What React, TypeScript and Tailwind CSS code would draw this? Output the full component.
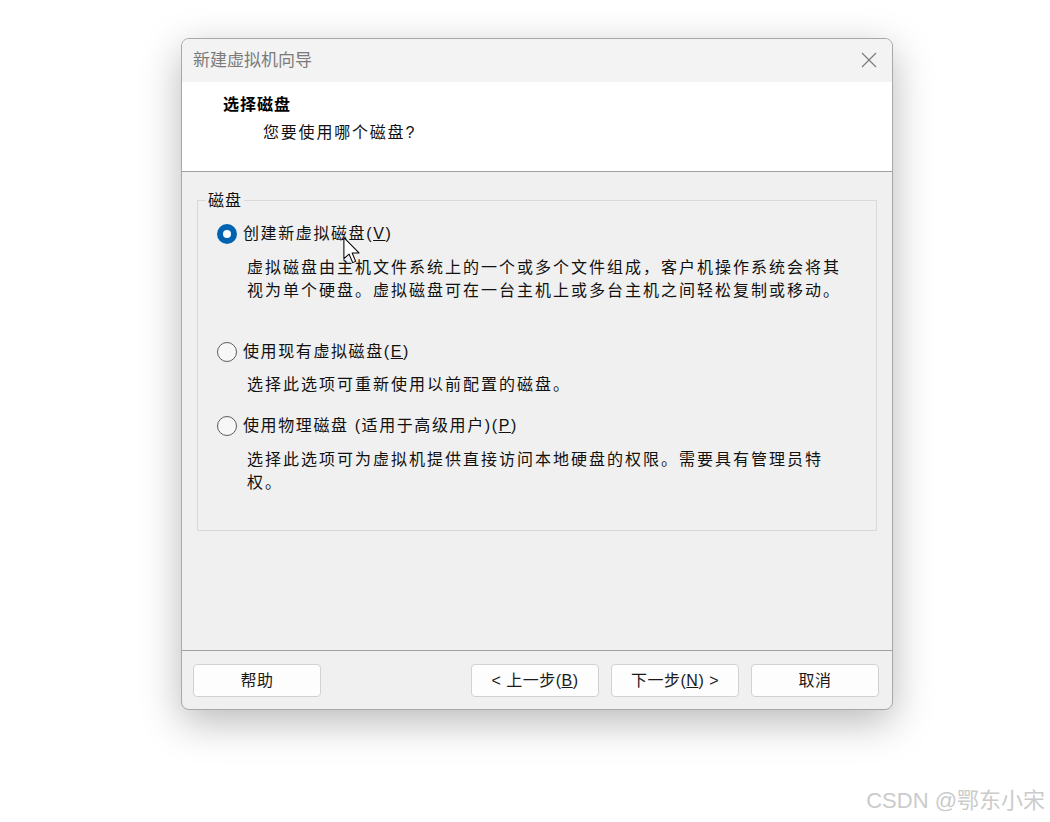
import React from "react";

const font = {
  fontFamily: '"Liberation Sans", "Noto Sans CJK SC", sans-serif',
};

function Radio({ checked }: { checked?: boolean }) {
  if (checked) {
    return (
      <span className="flex h-[20px] w-[20px] shrink-0 items-center justify-center rounded-full bg-[#0063b1]">
        <span className="h-[8px] w-[8px] rounded-full bg-white" />
      </span>
    );
  }
  return <span className="h-[20px] w-[20px] shrink-0 rounded-full border border-[#5c5c5c] bg-[#f7f7f7]" />;
}

function Btn({ children, className = "" }: { children: React.ReactNode; className?: string }) {
  return (
    <button
      className={`flex h-[33px] w-[128px] items-center justify-center rounded-[4px] border border-[#d2d2d2] bg-[#fdfdfd] text-[16px] tracking-[0.5px] text-[#1a1a1a] ${className}`}
    >
      {children}
    </button>
  );
}

export default function App() {
  return (
    <div className="relative h-[822px] w-[1050px] overflow-hidden bg-white pl-[181px] pt-[38px]" style={font}>
      <div className="flex w-[712px] flex-col overflow-hidden rounded-[8px] border border-[#a8a8a8] bg-[#f0f0f0] shadow-[0_12px_40px_rgba(0,0,0,0.28)]">
        {/* title bar */}
        <div className="flex h-[43px] items-center justify-between bg-[#f3f3f3] pl-[11px] pr-[15px]">
          <span className="text-[17px] text-[#7a7a7a]">新建虚拟机向导</span>
          <svg width="16" height="16" viewBox="0 0 16 16" className="mt-[-2px]">
            <path d="M1 1 L15 15 M15 1 L1 15" stroke="#7a7a7a" strokeWidth="1.2" />
          </svg>
        </div>

        {/* header */}
        <div className="flex h-[89px] flex-col bg-white pl-[41px] pt-[11px]">
          <span className="h-[24px] text-[16px] font-bold leading-[24px] tracking-[1px] text-black">选择磁盘</span>
          <span className="ml-[40px] mt-[4px] h-[24px] text-[16px] leading-[24px] tracking-[1.8px] text-[#111]">
            您要使用哪个磁盘?
          </span>
        </div>
        <div className="h-px bg-[#a0a0a0]" />

        {/* body */}
        <div className="h-[478px] px-[15px] pt-[28px]">
          <div className="relative h-[331px] border border-[#d9d9d9] pl-[19px] pt-[21px] text-[16px] tracking-[1.6px] text-[#111]">
            <span className="absolute left-[8px] top-[-12px] bg-[#f0f0f0] px-[2px] leading-[24px] tracking-[1px]">磁盘</span>

            <div className="flex h-[24px] items-center gap-[6px]">
              <Radio checked />
              <span>
                创建新虚拟磁盘(<span className="underline">V</span>)
              </span>
            </div>
            <div className="ml-[30px] mt-[10px] leading-[23px] tracking-[2px]">
              <div>虚拟磁盘由主机文件系统上的一个或多个文件组成，客户机操作系统会将其</div>
              <div>视为单个硬盘。虚拟磁盘可在一台主机上或多台主机之间轻松复制或移动。</div>
            </div>

            <div className="mt-[38px] flex h-[24px] items-center gap-[6px]">
              <Radio />
              <span>
                使用现有虚拟磁盘(<span className="underline">E</span>)
              </span>
            </div>
            <div className="ml-[30px] mt-[9px] leading-[23px] tracking-[2px]">
              <div>选择此选项可重新使用以前配置的磁盘。</div>
            </div>

            <div className="mt-[18px] flex h-[24px] items-center gap-[6px]">
              <Radio />
              <span>
                使用物理磁盘 (适用于高级用户)(<span className="underline">P</span>)
              </span>
            </div>
            <div className="ml-[30px] mt-[10px] leading-[23px] tracking-[2px]">
              <div>选择此选项可为虚拟机提供直接访问本地硬盘的权限。需要具有管理员特</div>
              <div>权。</div>
            </div>

            {/* mouse pointer */}
            <svg
              width="20"
              height="28"
              viewBox="0 0 14 20"
              className="absolute left-[145px] top-[36px]"
            >
              <path
                d="M0.5 0.5 L0.5 15.5 L4.2 12.2 L6.8 18.3 L8.9 17.4 L6.4 11.4 L11.3 11.4 Z"
                fill="#fff"
                stroke="#000"
                strokeWidth="0.75"
                strokeLinejoin="round"
              />
            </svg>
          </div>
        </div>

        <div className="h-px bg-[#a0a0a0]" />

        {/* footer */}
        <div className="flex h-[58px] items-start pl-[11px] pr-[13px] pt-[13px]">
          <Btn>帮助</Btn>
          <div className="ml-auto flex gap-[12px]">
            <Btn>
              &lt; 上一步(<span className="underline">B</span>)
            </Btn>
            <Btn>
              下一步(<span className="underline">N</span>) &gt;
            </Btn>
            <Btn>取消</Btn>
          </div>
        </div>
      </div>

      <span className="absolute bottom-[5px] right-[5px] text-[22px] text-[#cbcbcb]">CSDN @鄂东小宋</span>
    </div>
  );
}
